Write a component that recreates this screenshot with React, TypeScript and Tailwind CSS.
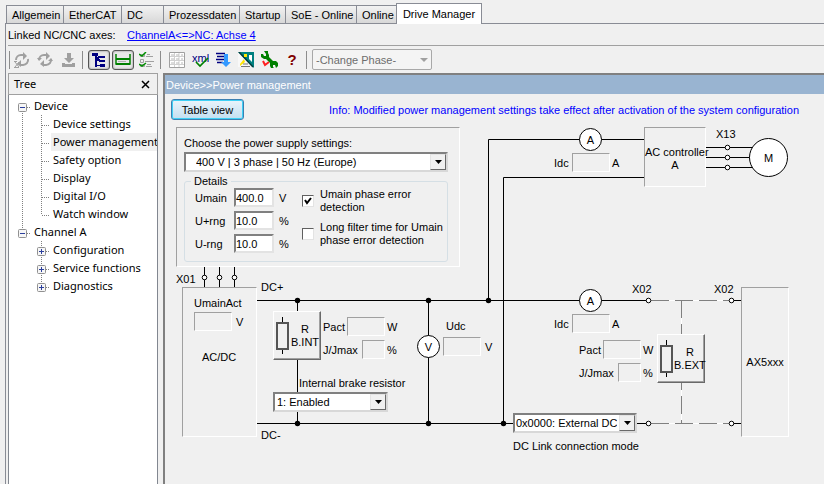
import * as React from "react";
import clsx from "clsx";

const tabs = ["Allgemein", "EtherCAT", "DC", "Prozessdaten", "Startup", "SoE - Online", "Online"];

type Guide = "minus" | "plus" | "plusEnd" | "minusEnd" | "tee" | "end" | "none";

interface TreeItem {
	label: string;
	guides: Guide[];
	selected?: boolean;
}

const treeItems: TreeItem[] = [
	{ label: "Device", guides: ["minus"] },
	{ label: "Device settings", guides: ["tee", "tee"] },
	{ label: "Power management", guides: ["tee", "tee"], selected: true },
	{ label: "Safety option", guides: ["tee", "tee"] },
	{ label: "Display", guides: ["tee", "tee"] },
	{ label: "Digital I/O", guides: ["tee", "tee"] },
	{ label: "Watch window", guides: ["tee", "end"] },
	{ label: "Channel A", guides: ["minusEnd"] },
	{ label: "Configuration", guides: ["none", "plus"] },
	{ label: "Service functions", guides: ["none", "plus"] },
	{ label: "Diagnostics", guides: ["none", "plusEnd"] },
];

const App = () => {
	return (
		<div className="flex min-h-screen flex-col bg-[#f0f0f0] pl-[5px] font-['Liberation_Sans',sans-serif] text-[11px] leading-[14px] text-black">
			<TabBar />
			<div className="flex grow flex-col border-l border-[#898c95] pl-[2px]">
				<div className="flex h-[22px] items-center border-b border-[#a0a0a0]">
					<span className="w-[119px]">Linked NC/CNC axes:</span>
					<a href="#axes" className="text-[#0000ff] underline">
						ChannelA&lt;=&gt;NC: Achse 4
					</a>
				</div>
				<Toolbar />
				<div className="flex grow gap-[5px]">
					<TreePanel />
					<main className="flex min-w-0 grow flex-col border-t-2 border-l-2 border-[#808080]">
						<h1 className="h-[19px] bg-[#99b4d1] pt-[3px] pl-px text-white">Device&gt;&gt;Power management</h1>
						<div className="flex items-center gap-[85px] px-[6px] pt-[5px] pb-px">
							<button className="h-[21px] w-[73px] shrink-0 rounded-[3px] border border-[#3c7fb1] bg-linear-to-b from-[#eaf4fb] to-[#c3dff0] shadow-[inset_0_0_0_1px_#3fd0f5]">
								Table view
							</button>
							<p className="whitespace-nowrap text-[#0000ff]">
								Info: Modified power management settings take effect after activation of the system configuration
							</p>
						</div>
						<Diagram />
					</main>
				</div>
			</div>
		</div>
	);
};

const TabBar = () => (
	<div role="tablist" className="flex h-[21px] shrink-0 items-end border-b border-[#898c95] mt-[3px] pl-px">
		{tabs.map((tab) => (
			<button
				key={tab}
				role="tab"
				className={clsx(
					"h-[18px] border-t border-r border-l border-[#898c95] bg-linear-to-b from-[#f2f2f2] to-[#d8d8d8] text-left pl-[5px] -mr-px whitespace-nowrap",
					tab === "Allgemein" && "w-[58px]",
					tab === "EtherCAT" && "w-[59px]",
					tab === "DC" && "w-[43px]",
					tab === "Prozessdaten" && "w-[77px]",
					tab === "Startup" && "w-[47px]",
					tab === "SoE - Online" && "w-[72px]",
					tab === "Online" && "w-[41px]"
				)}
			>
				{tab}
			</button>
		))}
		<button
			role="tab"
			aria-selected="true"
			className="-mb-px h-[21px] w-[86px] border-t border-r border-l border-[#898c95] bg-white"
		>
			Drive Manager
		</button>
	</div>
);

const Separator = () => <span className="h-[18px] w-px bg-[#8c8c8c]" />;

const ToolButton = ({
	label,
	pressed,
	children,
}: {
	label: string;
	pressed?: boolean;
	children: React.ReactNode;
}) => (
	<button
		aria-label={label}
		aria-pressed={pressed}
		className={clsx(
			"flex h-5 w-[22px] items-center justify-center",
			pressed && "rounded-[3px] border border-[#555] bg-[#e8e8e8] shadow-[inset_0_0_2px_#777]"
		)}
	>
		{children}
	</button>
);

const Toolbar = () => (
	<div role="toolbar" className="flex h-[27px] items-center pl-px">
		<Separator />
		<div className="flex gap-px pr-[3px] pl-px">
			<ToolButton label="Reload all">
				<ReloadIcon x />
			</ToolButton>
			<ToolButton label="Reload">
				<ReloadIcon />
			</ToolButton>
			<ToolButton label="Download">
				<svg width="13" height="14" fill="#a0a0a0">
					<path d="M5 0h4v5h3l-5 5-5-5h3zM0 10h3v1h7v-1h3v4H0z" />
				</svg>
			</ToolButton>
		</div>
		<Separator />
		<div className="flex gap-[2px] pr-[2px] pl-[5px]">
			<ToolButton label="Show tree" pressed>
				<svg width="16" height="16" fill="#000080">
					<path d="M1 1h6v3H1zM4 4h2v11H4zM6 7h3v1H6zM6 13h3v1H6zM7 4h3v1H7z" />
					<path d="M8 4h6v2H8zM8 8h6v2H8zM9 12h5v3H9zM6 5h2v4H6z" />
				</svg>
			</ToolButton>
			<ToolButton label="Show header" pressed>
				<svg width="16" height="14" fill="none">
					<path d="M1 1v10h14V1" stroke="#008000" strokeWidth="1.500" />
					<path d="M1 6h14M1 11h14" stroke="#008000" strokeWidth="2" />
					<path d="M3 8.500h8" stroke="#b0b0b0" />
				</svg>
			</ToolButton>
			<ToolButton label="Check list">
				<svg width="16" height="16" fill="none" stroke="#a0a0a0">
					<path d="M1.500 2.500h4v2h-4zM1.500 7.500h3v3h-3zM1.500 12.500h4v2h-4zM7 4.500h7M6 9.500h9M7 14.500h6M8 2.500h3M8 12.500h4" />
					<path d="M0 2l3 2 4-4M0 12l3 2 4-3" stroke="#009000" strokeWidth="1.500" />
				</svg>
			</ToolButton>
		</div>
		<Separator />
		<div className="flex gap-px pr-[3px] pl-[5px]">
			<ToolButton label="Table">
				<svg width="16" height="16">
					<path d="M.5.500h15v15H.5z" fill="#fff" stroke="#a0a0a0" />
					<path d="M1 4.500h14M1 8.500h14M1 12.500h14M5.500 1v14M10 1v14" stroke="#d0d0d0" />
					<path d="M2 3h3M7 3h3M12 3h2M2 7h3M7 7h3M12 7h2M2 11h3M7 11h3M12 11h2" stroke="#b8b8b8" />
				</svg>
			</ToolButton>
			<ToolButton label="Export xml">
				<svg width="17" height="16">
					<text x="0" y="10" fontSize="11" fill="#000080">
						xml
					</text>
					<path d="M4 10l4 4 8-8" fill="none" stroke="#008000" strokeWidth="1.700" />
				</svg>
			</ToolButton>
			<ToolButton label="Sort">
				<svg width="16" height="16">
					<path d="M1 1.500h9M2 4.500h7M1 7.500h8M2 10.500h6" stroke="#000080" strokeWidth="1.500" />
					<path d="M9 2h4v8h3l-5 5-5-5h3z" fill="#3399ff" />
				</svg>
			</ToolButton>
			<ToolButton label="Scope">
				<svg width="16" height="16">
					<path d="M0 0h16v16z" fill="#008080" />
					<path d="M0 1l14 14H0z" fill="#f8f8f8" />
					<path d="M11 3h3v7l-3-3z" fill="#fff" />
					<path d="M1 0l14 15" stroke="#003c3c" strokeWidth="1.500" />
					<path d="M6 2h3v3H6z" fill="#ffe600" />
					<path d="M6 7l1 3-5 4v-2z" fill="#ffe600" />
					<path d="M5 12h5M3 14.500h9" stroke="#777" />
				</svg>
			</ToolButton>
			<ToolButton label="Service">
				<svg width="17" height="17">
					<path
						d="M3 0h4v2l1 2v2l4 4h3l2 2v3l-2 2-1-3h-2v2l1 1h-3l-1-2v-3L5 8H3L0 6V3h2l1 2h2V3z"
						fill="#008000"
					/>
					<path d="M2 10l2 4 4-3" stroke="#ff2020" strokeWidth="2" fill="none" />
				</svg>
			</ToolButton>
			<ToolButton label="Help">
				<span className="text-[15px] font-bold text-[#800000]">?</span>
			</ToolButton>
		</div>
		<Separator />
		<label className="ml-[5px] grid w-[120px] items-center">
			<select
				disabled
				aria-label="Phase"
				className="col-start-1 row-start-1 h-[21px] appearance-none rounded-[2px] border border-[#a8a8a8] bg-[#f4f4f4] pl-[3px] text-[#6d6d6d] opacity-100"
			>
				<option>-Change Phase-</option>
			</select>
			<svg width="8" height="4" className="col-start-1 row-start-1 mr-1 justify-self-end fill-[#a0a0a0]">
				<path d="M0 0h8L4 4z" />
			</svg>
		</label>
	</div>
);

const ReloadIcon = ({ x }: { x?: boolean }) => (
	<svg width="16" height="16" fill="none" stroke="#a0a0a0" strokeWidth="2">
		<path d="M2 8a5 5 0 0 1 5-5h3M14 7a5 5 0 0 1-5 6H6" />
		<path d="M9 0l4 4-4 4zM7 8v7l-4-3z" fill="#a0a0a0" stroke="none" />
		{x ? (
			<path d="M1 10l4 5M5 10l-4 5M0 9.500h3M0 15.500h5" strokeWidth="1" />
		) : (
			<path d="M0 6l2 3 3-3zM11 9l3-3 2 3z" fill="#a0a0a0" stroke="none" />
		)}
	</svg>
);

const TreePanel = () => (
	<aside className="flex w-[150px] shrink-0 flex-col font-['Noto_Sans',sans-serif]">
		<div className="flex h-[22px] shrink-0 items-center justify-between border border-[#a0a0a0] pr-[7px] pl-[5px]">
			<span>Tree</span>
			<button aria-label="Close">
				<svg width="9" height="9" stroke="#000" strokeWidth="1.500">
					<path d="M1 1l7 7M8 1l-7 7" />
				</svg>
			</button>
		</div>
		<ul role="tree" className="grow border-r border-l border-[#828790] bg-white pt-[2px] pl-1">
			{treeItems.map((item) => (
				<li key={item.label} role="treeitem" className="flex h-[18px]">
					{item.guides.map((guide, i) => (
						<TreeGuide key={i} guide={guide} stem={i === 0 && item.guides.length === 2} />
					))}
					<span
						className={clsx(
							"flex grow items-center overflow-hidden pl-[2px] whitespace-nowrap",
							item.selected && "bg-[#f0f0f0]"
						)}
					>
						{item.label}
					</span>
				</li>
			))}
		</ul>
	</aside>
);

const TreeGuide = ({ guide, stem }: { guide: Guide; stem: boolean }) => {
	const box = guide.startsWith("minus") || guide.startsWith("plus");
	const top = guide !== "none" && guide !== "minus";
	const bottom = guide === "tee" || guide === "minus" || guide === "plus";
	return (
		<svg width="19" height="18" className="shrink-0">
			<g stroke="#808080" strokeDasharray="1 1">
				{top && <path d="M9.500 0v10" />}
				{bottom && <path d="M9.500 10v8" />}
				{guide !== "none" && !stem && <path d="M10 10.500h8" />}
			</g>
			{box && (
				<g>
					<rect x="5.500" y="6.500" width="8" height="8" rx="1" fill="#f6f6f6" stroke="#919191" />
					<path d="M7 10.500h5" stroke="#2b3f9c" />
					{guide.startsWith("plus") && <path d="M9.500 8v5" stroke="#2b3f9c" />}
				</g>
			)}
		</svg>
	);
};

const Dropdown = ({
	id,
	value,
	className,
	label,
}: {
	id: string;
	value: string;
	className: string;
	label?: string;
}) => (
	<div
		className={clsx(
			"grid h-5 grid-cols-[1fr_16px] items-center border-2 border-t-[#808080] border-r-[#d8d8d8] border-b-[#d8d8d8] border-l-[#808080] bg-white",
			className
		)}
	>
		<select id={id} aria-label={label} className="col-span-2 col-start-1 row-start-1 h-4 appearance-none pr-[18px]">
			<option>{value}</option>
		</select>
		<span className="pointer-events-none col-start-2 row-start-1 flex h-4 items-center justify-center border border-t-[#e3e3e3] border-r-[#696969] border-b-[#696969] border-l-[#e3e3e3] bg-[#f0f0f0]">
			<svg width="7" height="4">
				<path d="M0 0h7L3.500 4z" />
			</svg>
		</span>
	</div>
);

const SettingRow = ({ id, label, value, unit }: { id: string; label: string; value: string; unit: string }) => (
	<div className="flex h-[19px] items-center">
		<label htmlFor={id} className="w-[39px]">
			{label}
		</label>
		<input
			id={id}
			defaultValue={value}
			className="h-[19px] w-10 border-2 border-t-[#808080] border-r-[#e3e3e3] border-b-[#e3e3e3] border-l-[#808080] bg-white"
		/>
		<span className="w-[15px] pl-[5px]">{unit}</span>
	</div>
);

const CheckOption = ({ id, checked, children }: { id: string; checked?: boolean; children: React.ReactNode }) => (
	<label htmlFor={id} className="flex items-center gap-[6px] leading-[13px]">
		<span className="grid shrink-0">
			<input
				id={id}
				type="checkbox"
				defaultChecked={checked}
				className="peer col-start-1 row-start-1 h-3 w-3 appearance-none border border-t-[#606060] border-r-[#e3e3e3] border-b-[#e3e3e3] border-l-[#606060] bg-white"
			/>
			<svg
				width="12"
				height="12"
				className="pointer-events-none invisible col-start-1 row-start-1 peer-checked:visible"
				fill="none"
				stroke="#000"
				strokeWidth="2"
			>
				<path d="M3 5l2 3 4-5" />
			</svg>
		</span>
		<span>{children}</span>
	</label>
);

const SupplySettings = () => (
	<section className="relative w-[284px] border border-t-[#a0a0a0] border-r-white border-b-white border-l-[#a0a0a0] px-[7px] pt-2 pb-1">
		<label htmlFor="supply" className="block">
			Choose the power supply settings:
		</label>
		<Dropdown id="supply" value="400 V | 3 phase | 50 Hz (Europe)" className="mt-[2px] mr-1 pl-[10px]" />
		<fieldset className="mt-[2px] mr-1 h-[88px] rounded-[3px] border border-[#d5dfe5] pl-[10px]">
			<legend className="-ml-1 px-[3px]">Details</legend>
			<div className="flex gap-[13px]">
				<div className="flex flex-col gap-1">
					<SettingRow id="umain" label="Umain" value="400.0" unit="V" />
					<SettingRow id="uplus" label="U+rng" value="10.0" unit="%" />
					<SettingRow id="uminus" label="U-rng" value="10.0" unit="%" />
				</div>
				<div className="flex flex-col gap-[7px] whitespace-nowrap">
					<CheckOption id="phase-error" checked>
						Umain phase error
						<br />
						detection
					</CheckOption>
					<CheckOption id="long-filter">
						Long filter time for Umain
						<br />
						phase error detection
					</CheckOption>
				</div>
			</div>
		</fieldset>
	</section>
);

// Sunken value box with a caption in front and a unit behind
const Readout = ({
	id,
	label,
	unit,
	small,
	className,
}: {
	id: string;
	label: string;
	unit: string;
	small?: boolean;
	className: string;
}) => (
	<div className={clsx("absolute flex h-[19px] items-center justify-end", className)}>
		<label htmlFor={id} className="grow">
			{label}
		</label>
		<ReadoutBox id={id} small={small} />
		<span className="w-[14px] shrink-0 pl-[2px]">{unit}</span>
	</div>
);

const ReadoutBox = ({ id, small }: { id: string; small?: boolean }) => (
	<input
		id={id}
		readOnly
		className={clsx(
			"h-[19px] shrink-0 border border-t-[#a0a0a0] border-r-white border-b-white border-l-[#a0a0a0] bg-transparent",
			small ? "w-[23px]" : "w-[38px]"
		)}
	/>
);

const Resistor = ({ name, className }: { name: string; className: string }) => (
	<button
		className={clsx(
			"absolute flex h-[49px] w-12 items-center border border-t-white border-r-[#696969] border-b-[#696969] border-l-white bg-[#f0f0f0] pl-[2px] leading-[13px] shadow-[inset_-1px_-1px_#a0a0a0]",
			className
		)}
	>
		<svg width="14" height="40" className="shrink-0" stroke="#000">
			<path d="M6.500 1v37" />
			<rect x="1" y="7" width="11" height="26" fill="#f0f0f0" stroke="#555" strokeWidth="2" />
		</svg>
		<span className="grow text-center">
			R<br />
			{name}
		</span>
	</button>
);

const Block = ({ className, children }: { className: string; children: React.ReactNode }) => (
	<div
		className={clsx(
			"absolute border border-t-[#a0a0a0] border-r-white border-b-white border-l-[#a0a0a0] bg-[#f0f0f0] text-center",
			className
		)}
	>
		{children}
	</div>
);

const Meter = ({ x, y, name, r = 11 }: { x: number; y: number; name: string; r?: number }) => (
	<g>
		<circle cx={x} cy={y} r={r} fill="#fff" stroke="#000" />
		<text x={x} y={y + 4} textAnchor="middle">
			{name}
		</text>
	</g>
);

const terminals = [
	[39, 156],
	[54, 156],
	[69, 156],
	[562, 26],
	[562, 36],
	[562, 46],
	[483, 179],
	[566, 179],
	[483, 302],
	[566, 302],
];

const junctions = [
	[132, 179],
	[263, 179],
	[323, 179],
	[132, 302],
	[263, 302],
	[338, 302],
];

const Wiring = () => (
	<svg className="absolute inset-0 h-full w-full">
		<path
			d="M92 179.500H482M92 302.500H350M470 302.500H482M132.500 179V302M263.500 179V302M323.500 179V18.500H480M338.500 302V56.500H480M541 26.500H590M541 36.500H590M541 46.500H590M39.500 146V167M54.500 146V167M69.500 146V167M567 179.500H576M567 302.500H576"
			fill="none"
			stroke="#000"
		/>
		<path d="M486 179.500H564M486 302.500H564M516.500 179V302" fill="none" stroke="#fff" />
		<path d="M486 179.500H564M486 302.500H564M516.500 179V302" fill="none" stroke="#808080" strokeDasharray="18 6" />
		{junctions.map(([x, y]) => (
			<circle key={`${x}-${y}`} cx={x + 0.5} cy={y + 0.5} r="2.700" />
		))}
		{terminals.map(([x, y]) => (
			<circle key={`${x}-${y}`} cx={x + 0.5} cy={y + 0.5} r="2.300" fill="#fff" stroke="#000" />
		))}
		<Meter x={425.5} y={18.5} name="A" />
		<Meter x={425.5} y={179.5} name="A" />
		<Meter x={263.5} y={225.5} name="V" />
		<Meter x={603.5} y={36.5} r={19} name="M" />
	</svg>
);

const Diagram = () => (
	<div className="relative min-h-[361px] grow pt-[6px] pl-[11px]">
		<Wiring />
		<SupplySettings />

		<span className="absolute top-[151px] left-[11px]">X01</span>
		<Block className="top-[166px] left-[17px] h-[150px] w-[75px]">
			<div className="flex flex-col items-start pt-2 pl-[11px]">
				<label htmlFor="umain-act">UmainAct</label>
				<div className="flex items-center gap-1 pt-[2px]">
					<ReadoutBox id="umain-act" />
					<span>V</span>
				</div>
				<span className="pt-[19px] pl-2">AC/DC</span>
			</div>
		</Block>
		<span className="absolute top-[159px] left-[96px]">DC+</span>
		<span className="absolute top-[307px] left-[96px]">DC-</span>

		<Resistor name="B.INT" className="top-[190px] left-[108px]" />
		<Readout id="pact-int" label="Pact" unit="W" className="top-[196px] left-[158px] w-[76px]" />
		<Readout id="jmax-int" label="J/Jmax" unit="%" small className="top-[219px] left-[158px] w-[76px]" />
		<label htmlFor="brake" className="absolute top-[255px] left-[134px]">
			Internal brake resistor
		</label>
		<div className="absolute top-[271px] left-[108px] w-[115px]">
			<Dropdown id="brake" value="1: Enabled" className="pl-[2px]" />
		</div>

		<label htmlFor="udc" className="absolute top-[198px] left-[281px]">
			Udc
		</label>
		<div className="absolute top-[216px] left-[278px] flex items-center gap-1">
			<ReadoutBox id="udc" />
			<span>V</span>
		</div>

		<Readout id="idc-ac" label="Idc" unit="A" className="top-[32px] left-[389px] w-[70px]" />
		<Readout id="idc-link" label="Idc" unit="A" className="top-[193px] left-[389px] w-[70px]" />
		<Readout id="pact-ext" label="Pact" unit="W" className="top-[219px] left-[414px] w-[76px]" />
		<Readout id="jmax-ext" label="J/Jmax" unit="%" small className="top-[242px] left-[414px] w-[76px]" />
		<Resistor name="B.EXT" className="top-[213px] left-[492px]" />

		<Block className="top-[6px] left-[479px] h-[60px] w-[62px] pt-[18px] leading-[13px] whitespace-nowrap">
			AC controller
			<br />A
		</Block>
		<span className="absolute top-[6px] left-[551px]">X13</span>
		<span className="absolute top-[161px] left-[467px]">X02</span>
		<span className="absolute top-[161px] left-[549px]">X02</span>
		<Block className="top-[166px] left-[576px] flex h-[150px] w-[48px] items-center justify-center">AX5xxx</Block>

		<div className="absolute top-[292px] left-[348px] w-[124px]">
			<Dropdown id="dc-link" value="0x0000: External DC link" className="pl-px" />
		</div>
		<label htmlFor="dc-link" className="absolute top-[318px] left-[348px]">
			DC Link connection mode
		</label>
	</div>
);

export default App;
